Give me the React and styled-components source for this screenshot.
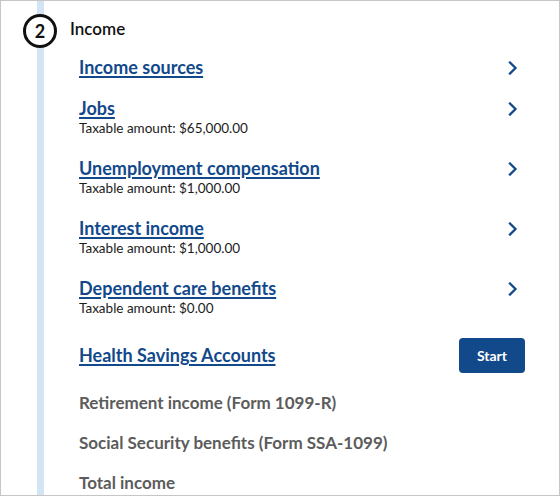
import React from "react";
import styled, { createGlobalStyle } from "styled-components";

const GlobalStyle = createGlobalStyle`
  html, body {
    margin: 0;
    padding: 0;
    background: #ffffff;
  }
  body {
    font-family: Lato, "Noto Sans", sans-serif;
    color: #1b1b1b;
  }
  * {
    box-sizing: border-box;
  }
`;

const Frame = styled.div`
  width: 560px;
  height: 496px;
  border: 1px solid #c6c6c6;
  overflow: hidden;
  background: #ffffff;
`;

const Step = styled.section`
  display: grid;
  grid-template-columns: 78px 1fr;
  grid-template-rows: auto 1fr;
  height: 100%;
`;

const Rail = styled.div`
  grid-column: 1;
  grid-row: 1 / span 2;
  display: flex;
  flex-direction: column;
  align-items: center;
`;

const RailLine = styled.div`
  width: 7px;
  background: #d3e4f5;
  height: ${(p) => (p.$grow ? "auto" : `${p.$h}px`)};
  flex: ${(p) => (p.$grow ? "1" : "none")};
`;

const StepNumber = styled.div`
  width: 34px;
  height: 34px;
  border: 3px solid #111111;
  border-radius: 50%;
  display: flex;
  align-items: center;
  justify-content: center;
  font-size: 18px;
  font-weight: 700;
  line-height: 1;
  color: #111111;
`;

const StepTitle = styled.h2`
  grid-column: 2;
  grid-row: 1;
  margin: 0 0 0 -9px;
  padding-top: 16px;
  height: 56px;
  font-size: 17px;
  font-weight: 600;
  line-height: 24px;
  color: #111111;
`;

const ItemList = styled.ul`
  grid-column: 2;
  grid-row: 2;
  list-style: none;
  margin: 0;
  padding: 0 34px 0 0;
  display: flex;
  flex-direction: column;
  gap: 20px;
`;

const Item = styled.li`
  display: flex;
  align-items: ${(p) => (p.$center ? "center" : "flex-start")};
  justify-content: space-between;
  min-height: 20px;
`;

const ItemText = styled.div`
  display: flex;
  flex-direction: column;
`;

const ItemLink = styled.a`
  font-size: 18px;
  font-weight: 700;
  line-height: 21px;
  color: #12498b;
  text-decoration: underline;
  text-decoration-thickness: 2px;
  text-underline-offset: 2px;
  cursor: pointer;
`;

const ItemLabel = styled.span`
  font-size: 17px;
  font-weight: 700;
  line-height: 20px;
  color: #5c5c5c;
`;

const Amount = styled.span`
  font-size: 13.5px;
  line-height: 19px;
  color: #1b1b1b;
`;

const Chevron = styled.span`
  width: 24px;
  height: 21px;
  display: flex;
  align-items: center;
  justify-content: center;
  color: #12498b;
`;

const StartButton = styled.button`
  width: 66px;
  height: 35px;
  border: none;
  border-radius: 4px;
  background: #12498b;
  color: #ffffff;
  font-family: inherit;
  font-size: 14px;
  font-weight: 700;
  cursor: pointer;
`;

const ChevronIcon = () => (
  <svg width="10" height="14" viewBox="0 0 10 14" fill="none">
    <path
      d="M2 1.5 L7.5 7 L2 12.5"
      stroke="currentColor"
      strokeWidth="2.3"
      strokeLinecap="square"
    />
  </svg>
);

const items = [
  { label: "Income sources" },
  { label: "Jobs", amount: "$65,000.00" },
  { label: "Unemployment compensation", amount: "$1,000.00" },
  { label: "Interest income", amount: "$1,000.00" },
  { label: "Dependent care benefits", amount: "$0.00" },
];

const locked = [
  "Retirement income (Form 1099-R)",
  "Social Security benefits (Form SSA-1099)",
  "Total income",
];

export default function App() {
  return (
    <>
      <GlobalStyle />
      <Frame>
        <Step>
          <Rail>
            <RailLine $h={13} />
            <StepNumber>2</StepNumber>
            <RailLine $grow />
          </Rail>
          <StepTitle>Income</StepTitle>
          <ItemList>
            {items.map((it) => (
              <Item key={it.label}>
                <ItemText>
                  <ItemLink>{it.label}</ItemLink>
                  {it.amount && <Amount>Taxable amount: {it.amount}</Amount>}
                </ItemText>
                <Chevron>
                  <ChevronIcon />
                </Chevron>
              </Item>
            ))}
            <Item $center>
              <ItemText>
                <ItemLink>Health Savings Accounts</ItemLink>
              </ItemText>
              <StartButton>Start</StartButton>
            </Item>
            {locked.map((l) => (
              <Item key={l}>
                <ItemLabel>{l}</ItemLabel>
              </Item>
            ))}
          </ItemList>
        </Step>
      </Frame>
    </>
  );
}
